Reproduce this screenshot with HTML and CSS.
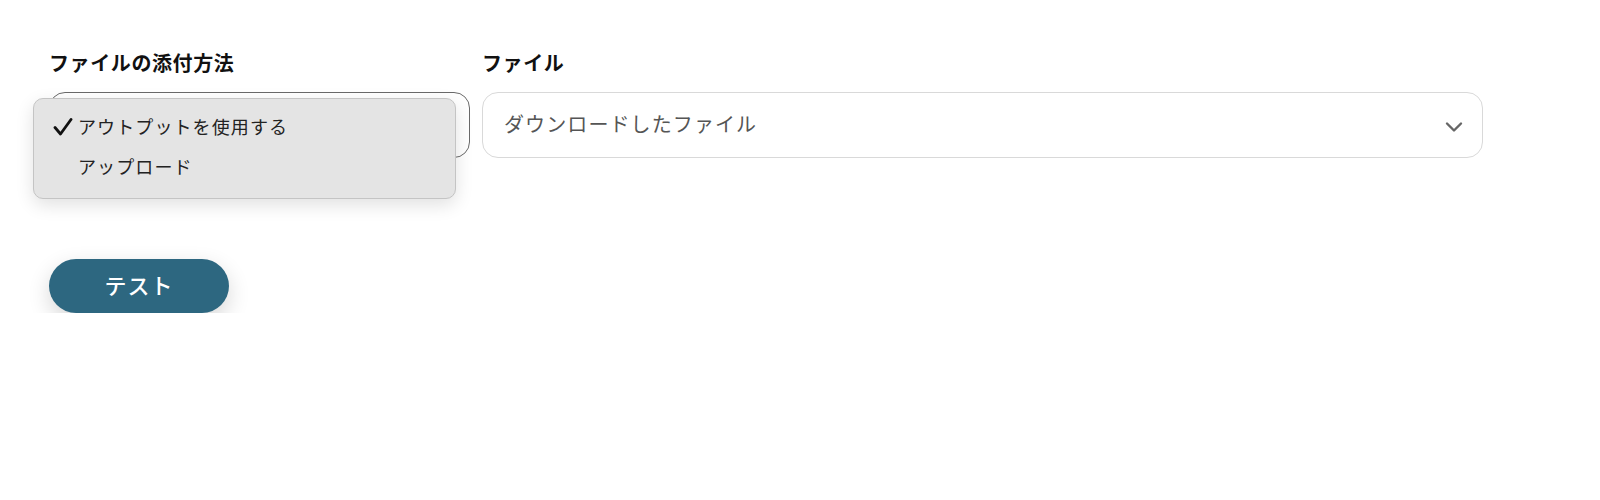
FILE: index.html
```html
<!DOCTYPE html>
<html lang="ja">
<head>
<meta charset="utf-8">
<link rel="stylesheet" href="styles.css">
</head>
<body>
<div class="page">
  <div class="row">
    <div class="field field-method">
      <div class="label">ファイルの添付方法</div>
      <div class="select-wrap">
        <div class="select select-dark"></div>
        <div class="menu">
          <div class="menu-item">
            <svg class="check" width="20" height="18" viewBox="0 0 20 18"><path d="M2 9.5 L7.5 16 L18 1.5" fill="none" stroke="#111" stroke-width="2.8" stroke-linecap="round" stroke-linejoin="round"/></svg>
            <span>アウトプットを使用する</span>
          </div>
          <div class="menu-item">
            <span class="check-space"></span>
            <span>アップロード</span>
          </div>
        </div>
      </div>
    </div>
    <div class="field field-file">
      <div class="label">ファイル</div>
      <div class="select select-light">
        <span class="value">ダウンロードしたファイル</span>
        <svg class="chev" width="18" height="12" viewBox="0 0 18 12"><path d="M2 2.5 L9 9.5 L16 2.5" fill="none" stroke="#666" stroke-width="2.4" stroke-linecap="round" stroke-linejoin="round"/></svg>
      </div>
    </div>
  </div>
  <button class="btn">テスト</button>
</div>
</body>
</html>
```
FILE: styles.css
```css
* { box-sizing: border-box; }
html, body { margin: 0; padding: 0; background: #fff; }
body {
  font-family: "Noto Sans CJK JP", "Noto Sans", sans-serif;
  color: #222;
}
.page {
  padding: 50px 0 0 49px;
}
.row {
  display: flex;
  gap: 12px;
}
.field-method { width: 421px; }
.field-file { width: 1001px; }
.label {
  font-size: 20px;
  font-weight: 700;
  line-height: 26px;
  letter-spacing: 0.6px;
  color: #111;
  margin-bottom: 16px;
}
.select-wrap { position: relative; }
.select {
  height: 66px;
  border-radius: 16px;
  background: #fff;
}
.select-dark {
  border: 1px solid #6a6a6a;
}
.select-light {
  border: 1px solid #d9d9d9;
  display: flex;
  align-items: center;
  justify-content: space-between;
  padding: 0 19px 0 21px;
}
.value {
  font-size: 20px;
  color: #555;
  letter-spacing: 1.1px;
  margin-top: -4px;
}
.chev { margin-top: 4px; }
.menu {
  position: absolute;
  left: -16px;
  top: 6px;
  width: 423px;
  height: 101px;
  background: #e4e4e4;
  border: 1px solid #c4c4c4;
  border-radius: 10px;
  box-shadow: 0 6px 18px rgba(0,0,0,0.12);
  padding: 7px 0 0 19px;
}
.menu-item {
  display: flex;
  align-items: center;
  height: 40px;
  font-size: 18px;
  letter-spacing: 1.1px;
  color: #222;
}
.check { margin-right: 5px; margin-top: 2px; }
.check-space { display: inline-block; width: 25px; }
.btn {
  display: block;
  margin-top: 101px;
  width: 180px;
  height: 54px;
  border: none;
  border-radius: 27px;
  background: #2d6780;
  color: #fff;
  font-family: "Noto Sans CJK JP", sans-serif;
  font-size: 22px;
  font-weight: 500;
  letter-spacing: 1px;
  box-shadow: 0 8px 22px rgba(0,0,0,0.16);
  padding: 0 0 4px 0;
}
```
